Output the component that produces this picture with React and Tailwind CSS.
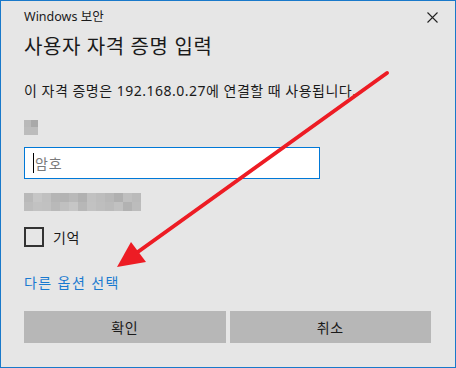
import React from 'react';

const fontStack = { fontFamily: '"Noto Sans", "Noto Sans CJK KR", sans-serif' };

// pixelated "blurred" cells
const nameCells = [
    ['#b9b9b9', '#a9a9a9'],
    ['#bcbcbc', '#bcbcbc'],
];

const hintTop = ['#b9b9b9', '#c6c6c6', '#c0c0c0', '#b5b5b5', '#b3b3b3', '#b9b9b9', '#b1b1b1', '#c1c1c1', '#bdbdbd', '#b8b8b8', '#b0b0b0', '#bfbfbf', '#bababa'];
const hintBottom = ['#bdbdbd', '#c2c2c2', '#c1c1c1', '#b9b9b9', '#c0c0c0', '#c6c6c6', '#b7b7b7', '#c2c2c2', '#bebebe', '#bbbbbb', '#c1c1c1', '#b2b2b2', '#bcbcbc'];

const Arrow = () => (
    <svg className="absolute left-0 top-0 pointer-events-none" width="456" height="368" viewBox="0 0 456 368">
        <line x1="386" y1="72" x2="134" y2="253" stroke="#ed1c24" strokeWidth="4" strokeLinecap="round" />
        <polygon points="116,266 130,241 145,261" fill="#ed1c24" />
    </svg>
);

const App = () => {
    return (
        <div className="relative w-[456px] h-[368px] border border-[#1979ca] bg-[#e6e6e6] text-[#1a1a1a] overflow-hidden" style={fontStack}>
            <div className="flex items-center justify-between h-[32px] pl-[23px] pr-[17px]">
                <span className="text-[12.5px]">Windows 보안</span>
                <svg width="11" height="11" viewBox="0 0 11 11">
                    <path d="M0.5 0.5 L10.5 10.5 M10.5 0.5 L0.5 10.5" stroke="#222" strokeWidth="1.1" />
                </svg>
            </div>

            <div className="px-[23px]">
                <div className="flex items-center h-[28px] text-[20px] tracking-[0.6px]">사용자 자격 증명 입력</div>

                <div className="flex items-center h-[20px] mt-[19px] text-[14px] tracking-[0.5px] whitespace-nowrap">
                    이 자격 증명은 192.168.0.27에 연결할 때 사용됩니다.
                </div>

                <div className="mt-[20px] flex flex-col w-[14px]">
                    {nameCells.map((row, i) => (
                        <div key={i} className="flex h-[7px] last:h-[8px]">
                            {row.map((c, j) => (
                                <div key={j} className="w-[7px] h-full" style={{ backgroundColor: c }} />
                            ))}
                        </div>
                    ))}
                </div>

                <div className="mt-[12px] w-[296px] h-[32px] border border-[#0078d7] bg-white flex items-center pl-[8px]">
                    <div className="w-px h-[20px] bg-black mr-[1px]" />
                    <span className="text-[14px] tracking-[0.8px] text-[#7a7a7a]">암호</span>
                </div>

                <div className="mt-[14px] flex flex-col w-[117px]">
                    <div className="flex h-[9px]">
                        {hintTop.map((c, i) => (
                            <div key={i} className="w-[9px] h-full" style={{ backgroundColor: c }} />
                        ))}
                    </div>
                    <div className="flex h-[9px]">
                        {hintBottom.map((c, i) => (
                            <div key={i} className="w-[9px] h-full" style={{ backgroundColor: c }} />
                        ))}
                    </div>
                </div>

                <div className="mt-[16px] flex items-center h-[20px] gap-[9px]">
                    <div className="w-[20px] h-[20px] border-2 border-[#333]" />
                    <span className="text-[14px] tracking-[0.5px]">기억</span>
                </div>

                <div className="mt-[25px] flex items-center h-[20px] text-[14px] tracking-[1.4px] text-[#1a7ad0]">다른 옵션 선택</div>

                <div className="mt-[19px] flex gap-[4px] pr-[1px]">
                    <button className="flex-1 h-[32px] bg-[#b7b7b7] text-[14px] tracking-[0.5px] text-[#1a1a1a]">확인</button>
                    <button className="flex-1 h-[32px] bg-[#b7b7b7] text-[14px] tracking-[0.5px] text-[#1a1a1a]">취소</button>
                </div>
            </div>

            <Arrow />
        </div>
    );
};

export default App;
